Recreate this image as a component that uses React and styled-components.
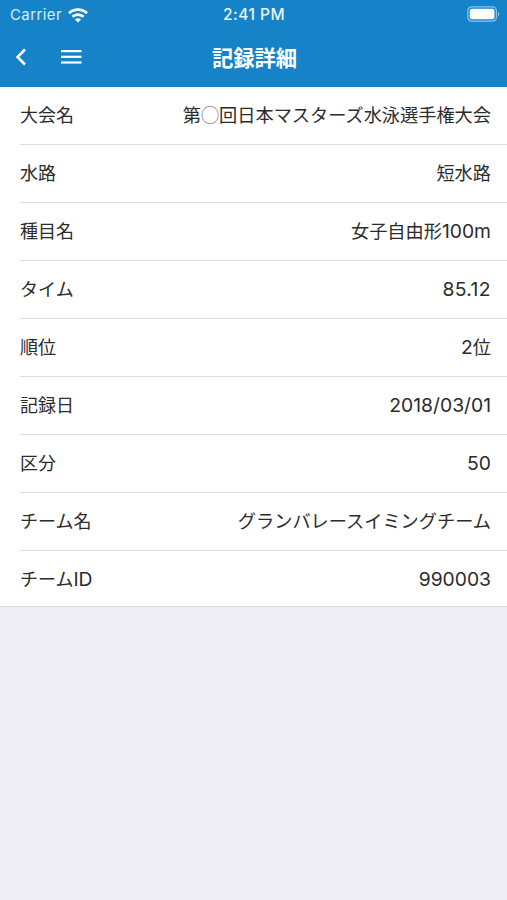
import React from 'react';
import styled, { createGlobalStyle } from 'styled-components';

const GlobalStyle = createGlobalStyle`
  * {
    box-sizing: border-box;
  }

  body {
    margin: 0;
    background-color: #efeef4;
    color: #2b2b2b;
    font-family: Inter, "Noto Sans CJK JP", sans-serif;
  }
`;

const Header = styled.header`
  height: 87px;
  background-color: #1683c9;
  color: #fff;
`;

const StatusBar = styled.div`
  display: grid;
  grid-template-columns: 1fr auto 1fr;
  align-items: center;
  height: 30px;
  padding: 0 7px 0 8px;
  font-size: 15px;
  line-height: 30px;
`;

const Carrier = styled.div`
  display: flex;
  align-items: center;
  gap: 6px;
  padding-left: 2px;
  color: #d9ecf8;
  letter-spacing: 0.4px;
`;

const Clock = styled.div`
  font-size: 15.5px;
  font-weight: 500;
  letter-spacing: 0.5px;
  color: #e8f4fb;
`;

const Battery = styled.div`
  display: flex;
  justify-content: flex-end;
  padding-bottom: 2px;
`;

const NavBar = styled.div`
  display: grid;
  grid-template-columns: 1fr auto 1fr;
  align-items: center;
  height: 57px;
  padding: 0 13px 2px 15px;
`;

const NavButtons = styled.div`
  display: flex;
  align-items: center;
  gap: 33px;
  padding-bottom: 1px;
`;

const NavButton = styled.button`
  display: flex;
  padding: 0;
  border: none;
  background: none;
  color: inherit;
  cursor: pointer;
`;

const Title = styled.h1`
  margin: 0;
  font-size: 21.3px;
  font-weight: 700;
  line-height: 54px;
`;

const List = styled.dl`
  margin: 0;
  padding-left: 20px;
  background-color: #fff;
  border-bottom: 1px solid #d9d9dc;
`;

const Row = styled.div`
  display: flex;
  justify-content: space-between;
  align-items: center;
  height: 58px;
  padding-right: 16px;
  border-bottom: 1px solid #dedede;

  &:last-child {
    height: 55px;
    padding-top: 2px;
    border-bottom: none;
  }
`;

const Label = styled.dt`
  font-size: 18px;
  line-height: 56px;
`;

const Value = styled.dd`
  margin: 0;
  padding-bottom: 2px;
  font-size: 18.2px;
  line-height: 54px;
`;

const Latin = styled.span`
  font-size: 19.3px;
  letter-spacing: ${(props) => props.$spacing || '0'};
`;

const Circle = styled.span`
  font-family: "Noto Sans CJK JP", sans-serif;
  font-weight: 300;
  color: #555;
`;

const records = [
    {id: 1, label: "大会名", value: "第◯回日本マスターズ水泳選手権大会"},
    {id: 2, label: "水路", value: "短水路"},
    {id: 3, label: "種目名", value: "女子自由形100m"},
    {id: 4, label: "タイム", value: "85.12", spacing: "0.4px"},
    {id: 5, label: "順位", value: "2位"},
    {id: 6, label: "記録日", value: "2018/03/01"},
    {id: 7, label: "区分", value: "50"},
    {id: 8, label: "チーム名", value: "グランバレースイミングチーム"},
    {id: 9, label: "チームID", value: "990003"},
];

// digits and latin letters are set slightly larger than the kana and kanji
const mixed = (text, spacing) =>
    text.split(/([0-9A-Za-z./]+|◯)/).filter(Boolean).map((part, i) => {
        if (part === '◯') {
            return <Circle key={i}>{part}</Circle>;
        }
        return /^[0-9A-Za-z./]/.test(part) ? <Latin key={i} $spacing={spacing}>{part}</Latin> : part;
    });

const App = () => {
    return (
        <>
            <GlobalStyle />
            <Header>
                <StatusBar>
                    <Carrier>
                        Carrier
                        <svg width="20" height="15" viewBox="0 0 20 15" fill="none" stroke="#fff" strokeWidth="2.7">
                            <path d="M1 5.2C6 .5 14 .5 19 5.2" />
                            <path d="M4.4 8.8C7.6 5.9 12.4 5.9 15.6 8.8" />
                            <path d="M10 14.6L6.9 11.5C8.7 9.9 11.3 9.9 13.1 11.5Z" fill="#fff" stroke="none" />
                        </svg>
                    </Carrier>
                    <Clock>2:41 PM</Clock>
                    <Battery>
                        <svg width="33" height="16" viewBox="0 0 33 16">
                            <rect x="0.8" y="0.8" width="28.6" height="14.4" rx="4" fill="none" stroke="#8ec5e8" strokeWidth="1.2" />
                            <rect x="2.7" y="2.7" width="24.8" height="10.6" rx="2.2" fill="#fff" />
                            <path d="M31 5.7C32.6 6.5 32.6 9.5 31 10.3Z" fill="#8ec5e8" />
                        </svg>
                    </Battery>
                </StatusBar>
                <NavBar>
                    <NavButtons>
                        <NavButton aria-label="戻る">
                            <svg width="12" height="18" viewBox="0 0 12 18" fill="none" stroke="#fff" strokeWidth="2.5">
                                <path d="M10 1.5L2.5 9L10 16.5" />
                            </svg>
                        </NavButton>
                        <NavButton aria-label="メニュー">
                            <svg width="22" height="16" viewBox="0 0 22 16" fill="#fff">
                                <rect x="1" y="1" width="20.5" height="2.2" />
                                <rect x="1" y="6.7" width="20.5" height="2.2" />
                                <rect x="1" y="12.4" width="20.5" height="2.2" />
                            </svg>
                        </NavButton>
                    </NavButtons>
                    <Title>記録詳細</Title>
                </NavBar>
            </Header>
            <List>
                {records.map((record) => (
                    <Row key={record.id}>
                        <Label>{mixed(record.label, '-0.1px')}</Label>
                        <Value>{mixed(record.value, record.spacing)}</Value>
                    </Row>
                ))}
            </List>
        </>
    );
}

export default App;
